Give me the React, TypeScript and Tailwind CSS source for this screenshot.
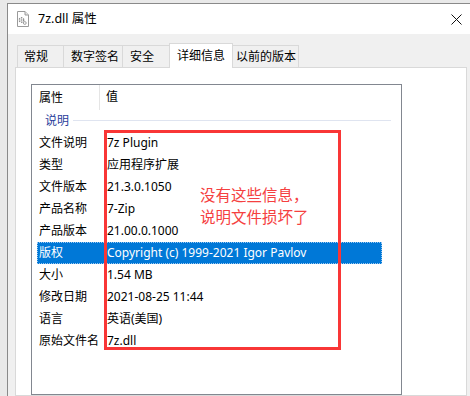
import React from "react";

const rows = [
  { k: "文件说明", v: "7z Plugin" },
  { k: "类型", v: "应用程序扩展" },
  { k: "文件版本", v: "21.3.0.1050" },
  { k: "产品名称", v: "7-Zip" },
  { k: "产品版本", v: "21.00.0.1000" },
  { k: "版权", v: "Copyright (c) 1999-2021 Igor Pavlov", selected: true },
  { k: "大小", v: "1.54 MB" },
  { k: "修改日期", v: "2021-08-25 11:44" },
  { k: "语言", v: "英语(美国)" },
  { k: "原始文件名", v: "7z.dll" },
];

const tabs = [
  { label: "常规", w: "w-[47px]", pl: "pl-[6px]" },
  { label: "数字签名", w: "w-[60px]", pl: "pl-[7px]" },
  { label: "安全", w: "w-[48px]", pl: "pl-[7px]" },
  { label: "详细信息", w: "w-[64px]", pl: "pl-[7px]", active: true },
  { label: "以前的版本", w: "w-[67px]", pl: "pl-[3px]" },
];

const DllIcon = () => (
  <svg width="12" height="16" viewBox="0 0 12 16">
    <path d="M0.5 0.5 H8 L11.5 4 V15.5 H0.5 Z" fill="#fff" stroke="#9a9a9a" />
    <path d="M8 0.5 V4 H11.5" fill="#e6e6e6" stroke="#9a9a9a" />
    <circle cx="4.5" cy="9" r="2.2" fill="none" stroke="#8c8c8c" strokeWidth="1.4" strokeDasharray="1.3 0.9" />
    <circle cx="4.5" cy="9" r="0.8" fill="#8c8c8c" />
    <circle cx="7.8" cy="12" r="1.4" fill="none" stroke="#a0a0a0" strokeWidth="1" />
  </svg>
);

export default function App() {
  return (
    <div className="w-[470px] h-[396px] overflow-hidden bg-[#e9e9e9] pt-[3px] pl-[7px] text-[12px] text-black font-['Noto_Sans','Noto_Sans_CJK_SC',sans-serif]">
      <div className="h-full border-l border-t border-[#8a8a8a] bg-white flex flex-col">
        {/* title bar */}
        <div className="h-[30px] shrink-0 flex items-center pl-[9px] pr-[8px]">
          <DllIcon />
          <span className="ml-[9px] text-[12.5px] leading-none">7z.dll 属性</span>
          <svg className="ml-auto" width="11" height="11" viewBox="0 0 11 11">
            <path d="M0.5 0.5 L10.5 10.5 M10.5 0.5 L0.5 10.5" stroke="#111" strokeWidth="1" />
          </svg>
        </div>

        <div className="flex-1 bg-[#f0f0f0] pl-[7px] pr-[3px] pt-[9px] flex flex-col">
          {/* tabs */}
          <div className="h-[24px] flex items-end pl-[2px] shrink-0">
            {tabs.map((t) =>
              t.active ? (
                <div
                  key={t.label}
                  className={`${t.w} ${t.pl} h-[25px] -mb-px -ml-px relative z-10 bg-white border border-b-0 border-[#d9d9d9] flex items-center`}
                >
                  {t.label}
                </div>
              ) : (
                <div
                  key={t.label}
                  className={`${t.w} ${t.pl} h-[22px] -ml-px first:ml-0 bg-[#f0f0f0] border border-b-0 border-[#d9d9d9] flex items-center`}
                >
                  {t.label}
                </div>
              )
            )}
          </div>

          {/* panel */}
          <div className="flex-1 bg-white border border-[#d9d9d9] pl-[15px] pt-[16px]">
            <div className="relative w-[371px] h-full border border-[#828790] bg-white">
              <div className="h-[24px] flex">
                <div className="w-[68px] pl-[7px] flex items-center border-r border-[#e5e5e5] h-[25px]">属性</div>
                <div className="pl-[6px] flex items-center">值</div>
              </div>
              <div className="h-[23px] flex items-center pl-[13px]">
                <span className="text-[#2a3d9b]">说明</span>
                <div className="flex-1 ml-[4px] mr-[10px] h-px bg-[#dfe4f0]" />
              </div>
              <div className="flex flex-col">
                {rows.map((r) => (
                  <div
                    key={r.k}
                    className={`ml-[5px] w-[345px] h-[22px] flex items-center ${
                      r.selected
                        ? "bg-[#0078d7] text-white outline-1 outline-dotted outline-[#9cc8f0] -outline-offset-1"
                        : ""
                    }`}
                  >
                    <div className="w-[70px] pl-[2px] shrink-0 whitespace-nowrap">{r.k}</div>
                    <div className="whitespace-nowrap">{r.v}</div>
                  </div>
                ))}
              </div>

              {/* annotation */}
              <div className="absolute left-[72px] top-[45px] w-[237px] h-[220px] border-[3px] border-[#f93636]" />
              <div className="absolute left-[168px] top-[99px] text-[15.5px] leading-[22px] text-[#f54040] whitespace-nowrap">
                <div>没有这些信息，</div>
                <div>说明文件损坏了</div>
              </div>
            </div>
          </div>
        </div>
      </div>
    </div>
  );
}
